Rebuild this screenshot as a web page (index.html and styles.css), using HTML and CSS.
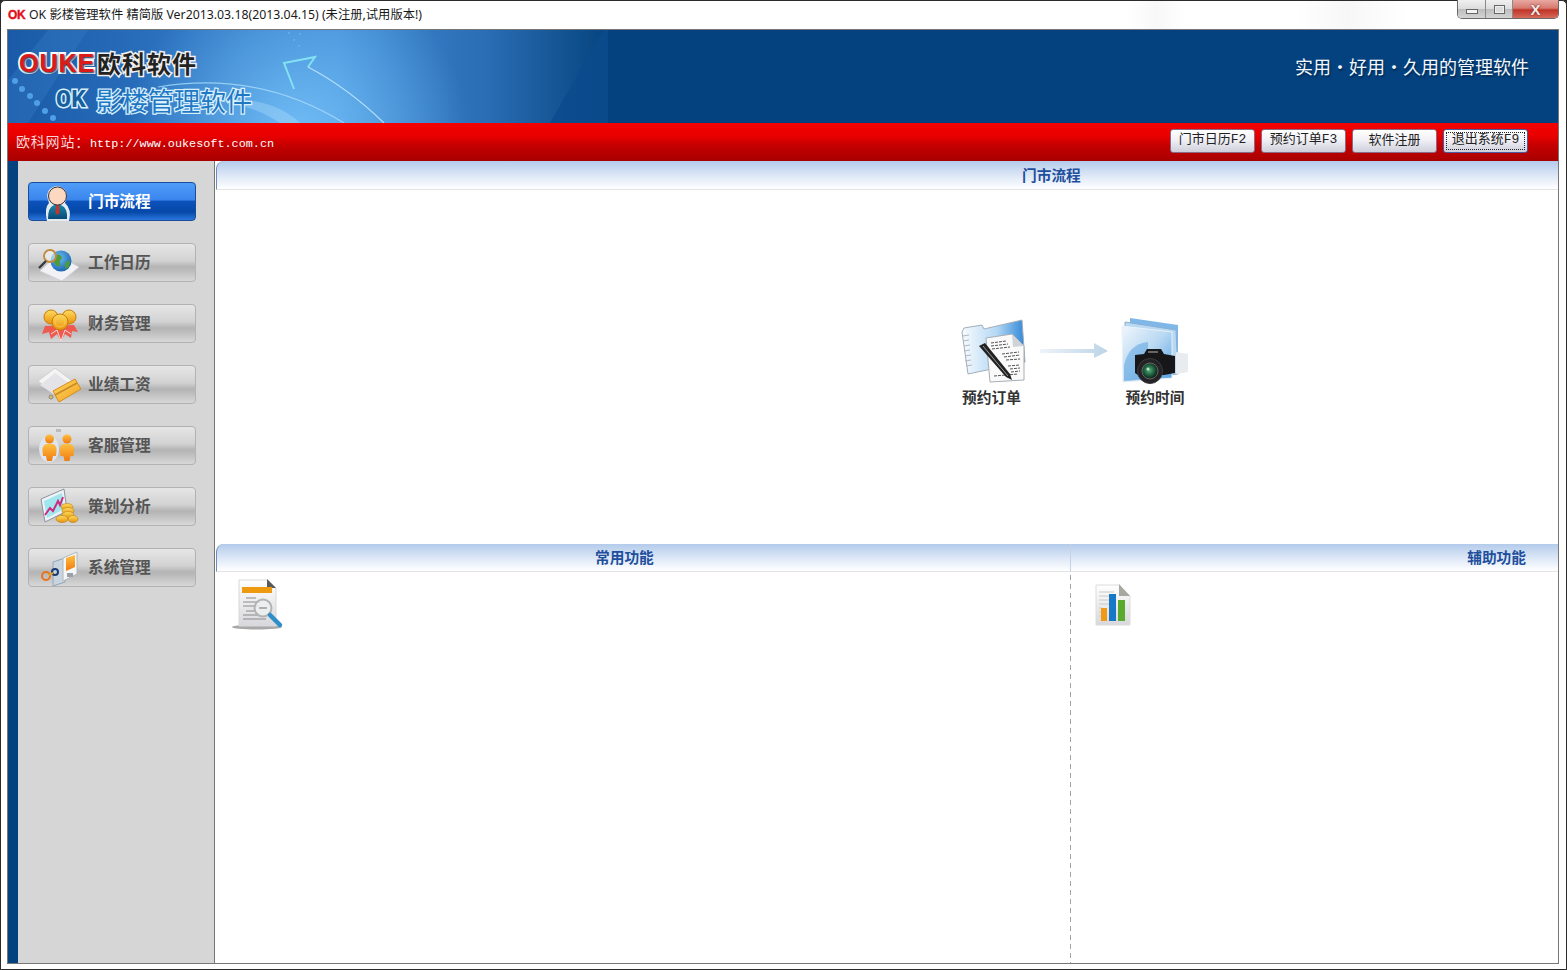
FILE: index.html
```html
<!DOCTYPE html>
<html lang="zh-CN">
<head>
    <meta charset="UTF-8">
    <title>OK 影楼管理软件</title>
    <link rel="stylesheet" href="styles.css">
</head>
<body>
    <svg class="svg-defs" aria-hidden="true">
        <defs>
            <linearGradient id="gCoin" x1="0" y1="0" x2="0" y2="1"><stop offset="0" stop-color="#ffdc60"/><stop offset="1" stop-color="#e8920c"/></linearGradient>
            <linearGradient id="gOrange" x1="0" y1="0" x2="0" y2="1"><stop offset="0" stop-color="#ffc040"/><stop offset="1" stop-color="#f07a10"/></linearGradient>
            <linearGradient id="gCard" x1="0" y1="0" x2="1" y2="1"><stop offset="0" stop-color="#ffd860"/><stop offset="1" stop-color="#f0a020"/></linearGradient>
            <linearGradient id="gPaper" x1="0" y1="0" x2="0" y2="1"><stop offset="0" stop-color="#ffffff"/><stop offset="1" stop-color="#d8d8dc"/></linearGradient>
            <linearGradient id="gFolder" x1="0" y1="0" x2="1" y2="0"><stop offset="0" stop-color="#f8fbfe"/><stop offset="0.55" stop-color="#b4d8f4"/><stop offset="1" stop-color="#2f86d8"/></linearGradient>
            <linearGradient id="gBlueBook" x1="0" y1="0" x2="1" y2="1"><stop offset="0" stop-color="#f0f6fc"/><stop offset="0.5" stop-color="#b8d8f2"/><stop offset="1" stop-color="#4f9ce0"/></linearGradient>
            <linearGradient id="gSuit" x1="0" y1="0" x2="0" y2="1"><stop offset="0" stop-color="#1a86a8"/><stop offset="1" stop-color="#0a4a78"/></linearGradient>
            <radialGradient id="gGlobe" cx="0.4" cy="0.35" r="0.7"><stop offset="0" stop-color="#6cc0f0"/><stop offset="1" stop-color="#1560b0"/></radialGradient>
            <radialGradient id="gLens" cx="0.45" cy="0.45" r="0.6"><stop offset="0" stop-color="#5ab078"/><stop offset="0.55" stop-color="#1c5a3c"/><stop offset="1" stop-color="#0c0c0c"/></radialGradient>
        </defs>
    </svg>

    <div class="window">
        <div class="titlebar">
            <span class="app-mark">OK</span>
            <span class="app-title">OK 影楼管理软件 精简版 Ver2013.03.18(2013.04.15) (未注册,试用版本!)</span>
            <div class="win-controls">
                <div class="win-btn win-min"><span class="glyph-min"></span></div>
                <div class="win-btn win-max"><span class="glyph-max"></span></div>
                <div class="win-btn win-close">X</div>
            </div>
        </div>

        <div class="client">
            <div class="banner">
                <svg class="banner-art" width="600" height="93" viewBox="0 0 600 93">
                    <defs>
                        <linearGradient id="gBanner" x1="0" y1="0" x2="1" y2="0">
                            <stop offset="0" stop-color="#1a5aa6"/>
                            <stop offset="0.25" stop-color="#2a70bd"/>
                            <stop offset="0.55" stop-color="#3f8ad4"/>
                            <stop offset="0.8" stop-color="#2a6db4"/>
                            <stop offset="1" stop-color="#06447f"/>
                        </linearGradient>
                        <radialGradient id="gGlow" cx="290" cy="105" r="170" gradientUnits="userSpaceOnUse">
                            <stop offset="0" stop-color="#74c0f8" stop-opacity="0.95"/>
                            <stop offset="1" stop-color="#74c0f8" stop-opacity="0"/>
                        </radialGradient>
                    </defs>
                    <rect width="600" height="93" fill="url(#gBanner)"/>
                    <rect width="600" height="93" fill="url(#gGlow)"/>
                    <polygon points="595,0 600,0 600,93 542,93" fill="#0b4a8c" opacity="0.8"/>
                    <polygon points="40,0 80,0 20,93 0,93 0,50" fill="#3f86cf" opacity="0.25"/>
                    <g fill="#4f9fe6">
                        <circle cx="7" cy="51" r="3"/><circle cx="14" cy="59" r="3"/><circle cx="22" cy="66" r="3"/>
                        <circle cx="29" cy="73" r="3"/><circle cx="37" cy="81" r="3"/><circle cx="45" cy="88" r="3"/>
                    </g>
                    <g fill="#7ab8ee" opacity="0.7">
                        <circle cx="281" cy="3" r="1"/><circle cx="292" cy="4" r="1"/><circle cx="286" cy="10" r="1"/><circle cx="291" cy="16" r="1"/>
                    </g>
                    <path d="M286 59 L276 33 L307 27 L300 37" fill="none" stroke="#82e2f2" stroke-width="2"/>
                    <path d="M300 37 Q340 58 376 93" fill="none" stroke="#b4e0fa" stroke-width="1.2"/>
                    <path d="M150 57 Q250 40 336 93" fill="none" stroke="#a8dcfa" stroke-width="1.2" opacity="0.8"/>
                    <path d="M200 70 Q262 64 292 93 L272 93 Q245 74 200 70 Z" fill="#b8e2fb" opacity="0.35"/>
                </svg>
                <div class="logo">
                    <div class="logo-line-one"><span class="logo-ouke">OUKE</span><span class="logo-cn">欧科软件</span></div>
                    <div class="logo-line-two"><span class="logo-ok">OK</span><span class="logo-product">影楼管理软件</span></div>
                </div>
                <div class="tagline">实用・好用・久用的管理软件</div>
            </div>

            <div class="redbar">
                <div class="site-link">欧科网站：<span class="site-url">http://www.oukesoft.com.cn</span></div>
                <div class="toolbar">
                    <button class="tool-btn">门市日历<span class="key">F2</span></button>
                    <button class="tool-btn">预约订单<span class="key">F3</span></button>
                    <button class="tool-btn">软件注册</button>
                    <button class="tool-btn focused"><span class="focus-ring">退出系统<span class="key">F9</span></span></button>
                </div>
            </div>

            <div class="main">
                <div class="strip"></div>
                <div class="sidebar">
                    <div class="nav-btn active">
                        <svg class="nav-icon" viewBox="0 0 44 40">
                            <path d="M10 39 Q7 26 12 21 Q8 11 13 7 Q20 1 27 7 Q32 11 28 21 Q35 27 32 39 Z" fill="#e4ecf0"/>
                            <path d="M11 37 Q11 25 17 23 L24 23 Q31 26 30 37 Z" fill="url(#gSuit)"/>
                            <path d="M19 23 L22 23 L22.500 31 L20.500 33 L18.500 31 Z" fill="#c8342a"/>
                            <circle cx="20.500" cy="14" r="9" fill="#fcd8c0" stroke="#3a3030" stroke-width="1"/>
                        </svg>
                        <span>门市流程</span>
                    </div>
                    <div class="nav-btn">
                        <svg class="nav-icon" viewBox="0 0 44 40">
                            <polygon points="3,28 20,12 42,24 25,38" fill="#f2f2f6" stroke="#d4d4dc"/>
                            <circle cx="24" cy="18" r="10.500" fill="url(#gGlobe)"/>
                            <path d="M18 12 Q24 10 25 15 Q21 19 24 23 Q19 24 17 19 Z M28 20 L33 17 L32 24 L28 26 Z" fill="#4f9a3a"/>
                            <circle cx="13" cy="13" r="6" fill="#f4fafc" fill-opacity="0.5" stroke="#c08a40" stroke-width="1.800"/>
                            <path d="M9 18 L2 25" stroke="#3a3a3a" stroke-width="2.400"/>
                        </svg>
                        <span>工作日历</span>
                    </div>
                    <div class="nav-btn">
                        <svg class="nav-icon" viewBox="0 0 44 40">
                            <path d="M8 22 L5 30 L12 28 L14 35 L20 30 L24 37 L28 30 L34 34 L35 27 L41 28 L37 21 Z" fill="#ee5a50"/>
                            <path d="M14 30 L20 26 L24 37 L28 26 L34 30" fill="none" stroke="#ffd8d0" stroke-width="1"/>
                            <circle cx="14" cy="13" r="7" fill="url(#gCoin)" stroke="#c87c08"/>
                            <circle cx="32" cy="13" r="7" fill="url(#gCoin)" stroke="#c87c08"/>
                            <circle cx="23" cy="18" r="8" fill="url(#gCoin)" stroke="#c87c08"/>
                            <circle cx="23" cy="18" r="5" fill="none" stroke="#f8c850"/>
                        </svg>
                        <span>财务管理</span>
                    </div>
                    <div class="nav-btn">
                        <svg class="nav-icon" viewBox="0 0 44 40">
                            <polygon points="1,16 18,3 38,18 20,32" fill="#f4f4f4" stroke="#cfcfcf"/>
                            <polygon points="3,20 18,8 32,18 18,30" fill="#e4e4e8"/>
                            <polygon points="16,26 38,14 44,24 22,37" fill="url(#gCard)" stroke="#d88a20"/>
                            <path d="M18 30 L40 18" stroke="#c88a28" stroke-width="1.500"/>
                            <circle cx="14" cy="32" r="2" fill="#d8c060" stroke="#888"/>
                        </svg>
                        <span>业绩工资</span>
                    </div>
                    <div class="nav-btn">
                        <svg class="nav-icon" viewBox="0 0 44 40">
                            <ellipse cx="12" cy="23" rx="10" ry="13" fill="#dde6f0"/>
                            <g fill="url(#gOrange)">
                                <circle cx="12.500" cy="13" r="4.500"/>
                                <path d="M6 30 Q4 19 9 18 L16 18 Q21 19 19 30 L16 30 L15 35 L10 35 L9 30 Z"/>
                                <circle cx="30" cy="13" r="4.500"/>
                                <path d="M23.500 30 Q21.500 19 26.500 18 L33.500 18 Q38.500 19 36.500 30 L33.500 30 L32.500 35 L27.500 35 L26.500 30 Z"/>
                            </g>
                            <rect x="19" y="3" width="5" height="3" fill="#bbb"/>
                        </svg>
                        <span>客服管理</span>
                    </div>
                    <div class="nav-btn">
                        <svg class="nav-icon" viewBox="0 0 44 40">
                            <polygon points="4,12 27,2 30,24 8,35" fill="#eef2f6" stroke="#8a94a0"/>
                            <polygon points="7,14 25,6 27,22 10,31" fill="#9fe6ee"/>
                            <path d="M8 28 L13 21 L16 24 L21 14 L23 18 L26 10" fill="none" stroke="#d02a80" stroke-width="2"/>
                            <g fill="url(#gCoin)" stroke="#b8801a" stroke-width="0.600">
                                <ellipse cx="30" cy="20" rx="6" ry="3.500"/><ellipse cx="31" cy="24" rx="6" ry="3.500"/>
                                <ellipse cx="31" cy="28" rx="6" ry="3.500"/><ellipse cx="25" cy="32" rx="6" ry="3.500"/>
                                <ellipse cx="36" cy="32" rx="5" ry="3.500"/>
                            </g>
                        </svg>
                        <span>策划分析</span>
                    </div>
                    <div class="nav-btn">
                        <svg class="nav-icon" viewBox="0 0 44 40">
                            <polygon points="16,14 28,10 28,34 16,38" fill="#c8d4e0" stroke="#96a6b6"/>
                            <polygon points="26,10 40,4 40,26 26,33" fill="#f4f6f8" stroke="#b0b8c0"/>
                            <polygon points="29,10 38,7 38,19 29,23" fill="url(#gOrange)"/>
                            <rect x="30" y="25" width="6" height="4" fill="#9aa0a8"/>
                            <circle cx="9" cy="28" r="4" fill="none" stroke="#e8731a" stroke-width="2"/>
                            <circle cx="18" cy="24" r="3" fill="none" stroke="#1a3a70" stroke-width="2"/>
                            <path d="M12 27 L16 25" stroke="#e8a01a" stroke-width="2"/>
                        </svg>
                        <span>系统管理</span>
                    </div>
                </div>

                <div class="content">
                    <div class="panel-head head-flow">门市流程</div>
                    <div class="flow">
                        <div class="flow-item">
                            <svg class="flow-icon" width="66" height="66" viewBox="0 0 66 66">
                                <path d="M2 14 L4 10 L22 7 L24 11 L62 2 L65 44 L8 56 Z" fill="url(#gFolder)" stroke="#a4aeb8"/>
                                <g stroke="#b0b8c4"><path d="M3 18 L9 17 M3 23 L9 22 M4 28 L10 27 M4 33 L10 32 M5 38 L11 37 M5 43 L11 42 M6 48 L12 47"/></g>
                                <polygon points="26,20 52,16 64,28 64,62 30,64" fill="#fafafa" stroke="#a8aeb4"/>
                                <polygon points="52,16 64,28 53,29" fill="#d0d4d8"/>
                                <g stroke="#555" stroke-width="1" stroke-dasharray="3 1"><path d="M31 25 L46 23 M31 28 L48 26 M32 31 L50 29 M42 36 L59 34 M44 39 L60 37 M46 42 L60 41 M48 48 L60 47 M50 51 L60 50 M51 54 L60 53 M34 58 L58 56"/></g>
                                <path d="M19 28 L25 25 L50 56 L52 62 L46 59 Z" fill="#222"/>
                                <path d="M23 28 L48 58" stroke="#9a9a9a"/>
                            </svg>
                            <span class="flow-label label-first">预约订单</span>
                        </div>
                        <svg class="flow-arrow" width="68" height="16" viewBox="0 0 68 16">
                            <defs><linearGradient id="gArrow" x1="0" y1="0" x2="1" y2="0"><stop offset="0" stop-color="#eef3f8"/><stop offset="1" stop-color="#bcd4e8"/></linearGradient></defs>
                            <polygon points="0,6 54,6 54,0 68,8 54,15 54,10 0,10" fill="url(#gArrow)"/>
                        </svg>
                        <div class="flow-item">
                            <svg class="flow-icon" width="70" height="66" viewBox="0 0 70 66">
                                <polygon points="10,0 58,7 58,48 10,40" fill="#7fb8e8"/>
                                <polygon points="5,4 56,12 58,56 5,62" fill="#b9d8f2" stroke="#88b0d4"/>
                                <polygon points="2,8 52,14 52,60 3,64" fill="url(#gBlueBook)" stroke="#e8f2fb"/>
                                <path d="M4 48 Q8 26 28 24 L28 60 L4 63 Z" fill="#5ba4e0" opacity="0.55"/>
                                <polygon points="56,34 68,36 68,54 56,56" fill="#e8ecef"/>
                                <path d="M15 37 L24 36 L27 31 L41 31 L44 36 L55 38 L55 55 L44 57 L18 57 L15 55 Z" fill="#17171a"/>
                                <rect x="28" y="33" width="10" height="2" fill="#666"/>
                                <circle cx="30" cy="53" r="12.500" fill="#232326" stroke="#3a3a3e"/>
                                <circle cx="30" cy="53" r="8" fill="url(#gLens)" stroke="#666"/>
                                <circle cx="28" cy="51" r="1.500" fill="#b4e4c4"/>
                            </svg>
                            <span class="flow-label">预约时间</span>
                        </div>
                    </div>

                    <div class="lower">
                        <div class="lower-col col-common">
                            <div class="panel-head head-common">常用功能</div>
                            <div class="lower-body body-common">
                                <svg width="52" height="54" viewBox="0 0 52 54">
                                    <ellipse cx="25" cy="49" rx="25" ry="2.500" fill="#a8a8a8"/>
                                    <polygon points="7,2 36,2 44,10 44,48 7,48" fill="url(#gPaper)" stroke="#d8d8d8"/>
                                    <polygon points="35,1 44,10 35,10" fill="#5a5a5a"/>
                                    <rect x="10" y="9" width="30" height="6" fill="#ee9a10"/>
                                    <g stroke="#8a8a8a"><path d="M14 20 L24 20 M11 24 L28 24 M11 28 L26 28 M14 33 L24 33 M11 37 L26 37 M11 41 L34 41"/></g>
                                    <circle cx="31" cy="30" r="8.500" fill="#eef0f0" fill-opacity="0.8" stroke="#b0b4b4" stroke-width="2"/>
                                    <path d="M27 30 L35 30" stroke="#9a9a9a" stroke-width="1.500"/>
                                    <path d="M38 37 L48 47" stroke="#2f8ec8" stroke-width="4.500" stroke-linecap="round"/>
                                </svg>
                            </div>
                        </div>
                        <div class="lower-col col-aux">
                            <div class="panel-head head-aux">辅助功能</div>
                            <div class="lower-body body-aux">
                                <svg width="38" height="44" viewBox="0 0 38 44">
                                    <polygon points="2,2 25,2 36,13 36,42 2,42" fill="url(#gPaper)" stroke="#dcdcdc"/>
                                    <polygon points="25,1 36,13 25,13" fill="#a8a8a0"/>
                                    <g stroke="#c8c8c8"><path d="M5 9 L20 9 M5 13 L20 13 M5 17 L15 17 M5 21 L15 21 M5 25 L8 25 M5 29 L8 29 M5 33 L8 33"/></g>
                                    <rect x="7" y="25" width="6" height="13" fill="#f09a18"/>
                                    <rect x="15" y="11" width="7" height="27" fill="#1878c8"/>
                                    <rect x="24" y="17" width="7" height="21" fill="#5aaa30"/>
                                </svg>
                            </div>
                        </div>
                    </div>
                </div>
            </div>
        </div>
    </div>
</body>
</html>
```

FILE: styles.css
```css
* {
    box-sizing: border-box;
}
html, body {
    margin: 0;
    padding: 0;
}
body {
    width: 1567px;
    height: 970px;
    overflow: hidden;
    background-color: #2a2a2a;
    font-family: "Noto Sans CJK SC", "Noto Sans", sans-serif;
}
.svg-defs {
    position: absolute;
    width: 0;
    height: 0;
}
.window {
    width: 1567px;
    height: 970px;
    display: flex;
    flex-direction: column;
    background-color: #fff;
    border: 1px solid #2b2b2b;
    border-radius: 5px 5px 0 0;
    padding: 0 7px 5px 6px;
}

/* title bar */
.titlebar {
    height: 28px;
    flex-shrink: 0;
    display: flex;
    align-items: flex-start;
    background: linear-gradient(90deg, #fff 1120px, #f8f8f8 1150px, #fff 1180px, #fff 1290px, #f7f7f7 1340px, #fff 1400px);
}
.app-mark {
    margin: 7px 0 0 1px;
    width: 21px;
    font-family: "Liberation Sans", sans-serif;
    font-size: 12px;
    font-weight: bold;
    letter-spacing: -0.3px;
    line-height: 14px;
    color: #e0101a;
    -webkit-text-stroke: 0.4px #e0101a;
}
.app-title {
    margin-top: 6px;
    font-family: "Noto Sans", "Noto Sans CJK SC", sans-serif;
    font-size: 12.300px;
    line-height: 16px;
    color: #1a1a1a;
    white-space: nowrap;
}
.win-controls {
    margin-left: auto;
    display: flex;
    height: 19px;
    margin-top: -1px;
    border: 1px solid #6a6a6a;
    border-top: none;
    border-radius: 0 0 5px 5px;
    overflow: hidden;
}
.win-btn {
    display: flex;
    align-items: center;
    justify-content: center;
    background: linear-gradient(#f0f0f0, #dcdcdc 50%, #bdbdbd 52%, #d4d4d4);
    border-right: 1px solid #8a8a8a;
}
.win-min {
    width: 28px;
}
.win-max {
    width: 27px;
}
.win-close {
    width: 45px;
    border-right: none;
    background: linear-gradient(#e8a8a0, #d87a70 45%, #c03428 55%, #d86a5a);
    color: #f4e8e4;
    font-family: "Liberation Sans", sans-serif;
    font-size: 15px;
    font-weight: bold;
    text-shadow: 0 0 2px #5a1a14;
}
.glyph-min {
    width: 12px;
    height: 5px;
    margin-top: 5px;
    border: 1px solid #666;
    background-color: #f4f4f4;
}
.glyph-max {
    width: 11px;
    height: 9px;
    border: 1px solid #666;
    background-color: #dcdcdc;
    box-shadow: inset 0 0 0 1px #f0f0f0;
}

/* client area */
.client {
    flex: 1;
    display: flex;
    flex-direction: column;
    min-height: 0;
    border: 1px solid #777;
}
.banner {
    position: relative;
    height: 93px;
    flex-shrink: 0;
    display: flex;
    justify-content: space-between;
    background-color: #04427f;
}
.banner-art {
    position: absolute;
    left: 0;
    top: 0;
}
.logo {
    position: relative;
    padding: 18px 0 0 11px;
}
.logo-line-one {
    display: flex;
    align-items: center;
    height: 30px;
}
.logo-ouke {
    width: 78px;
    font-family: "Liberation Sans", sans-serif;
    font-size: 25px;
    font-weight: bold;
    letter-spacing: 1px;
    color: #dc1a1a;
    -webkit-text-stroke: 4px #fff;
    paint-order: stroke fill;
    text-shadow: 1px 1px 2px #0a2a50;
}
.logo-cn {
    font-size: 24px;
    font-weight: bold;
    letter-spacing: 1px;
    line-height: 30px;
    color: #222;
    -webkit-text-stroke: 3px #f0f0f0;
    paint-order: stroke fill;
}
.logo-line-two {
    display: flex;
    align-items: center;
    height: 30px;
    margin-top: 7px;
    padding-left: 37px;
}
.logo-ok {
    width: 40px;
    font-family: "Liberation Mono", monospace;
    font-size: 25px;
    font-weight: bold;
    color: #17609f;
    -webkit-text-stroke: 3px #d8f0fc;
    paint-order: stroke fill;
}
.logo-product {
    font-size: 26px;
    line-height: 30px;
    color: #1f78c4;
    -webkit-text-stroke: 2.500px #d8f0fc;
    paint-order: stroke fill;
}
.tagline {
    position: relative;
    padding: 23px 29px 0 0;
    font-size: 18px;
    line-height: 26px;
    color: #f4f8fc;
    text-shadow: 1px 2px 2px #01274e;
}
.redbar {
    height: 38px;
    flex-shrink: 0;
    display: flex;
    align-items: center;
    justify-content: space-between;
    padding: 0 30px 0 8px;
    background: linear-gradient(#f40000, #e80000 35%, #c40000 60%, #a80000);
}
.site-link {
    margin-bottom: 2px;
    font-size: 14px;
    letter-spacing: 0.8px;
    color: #f6d4d4;
    white-space: nowrap;
}
.site-url {
    font-family: "Liberation Mono", monospace;
    font-size: 11.800px;
    letter-spacing: 0;
    color: #fff;
}
.toolbar {
    display: flex;
    gap: 6px;
    margin-top: -2px;
}
.tool-btn {
    width: 85px;
    height: 24px;
    padding: 0 0 5px;
    border: 1px solid #8a6a86;
    border-radius: 3px;
    background: linear-gradient(#ffffff, #f0f0f6 45%, #cfcfdb);
    font-family: "Noto Sans CJK SC", sans-serif;
    font-size: 13px;
    line-height: 16px;
    color: #222;
    white-space: nowrap;
}
.key {
    font-family: "Liberation Mono", monospace;
    font-size: 13px;
}
.tool-btn.focused {
    border-color: #4a5a9a;
    padding: 2px;
}
.focus-ring {
    display: block;
    height: 18px;
    border: 1px dotted #222;
    line-height: 10px;
}

/* sidebar */
.main {
    flex: 1;
    display: flex;
    min-height: 0;
}
.strip {
    width: 10px;
    background-color: #04427f;
}
.sidebar {
    width: 197px;
    flex-shrink: 0;
    display: flex;
    flex-direction: column;
    gap: 22px;
    padding: 21px 18px 0 10px;
    background-color: #d6d6d6;
    border-right: 1px solid #777;
}
.nav-btn {
    height: 39px;
    display: flex;
    align-items: center;
    gap: 7px;
    padding-left: 8px;
    border: 1px solid #b2b2b2;
    border-radius: 4px;
    background: linear-gradient(#e6e6e6, #d2d2d2 45%, #b4b4b4 62%, #bcbcbc 72%, #d8d8d8);
    font-size: 15.700px;
    font-weight: bold;
    line-height: 20px;
    color: #555;
    white-space: nowrap;
}
.nav-btn span {
    padding-bottom: 2px;
}
.nav-btn.active {
    border-color: #1b4c98;
    background: linear-gradient(#4f9cf8, #3a86ee 45%, #0c52ba 50%, #0548a8 78%, #2a76dc);
    color: #fff;
}
.nav-icon {
    width: 44px;
    height: 40px;
    flex-shrink: 0;
}

/* content */
.content {
    flex: 1;
    min-width: 0;
    display: flex;
    flex-direction: column;
    background-color: #fff;
}
.panel-head {
    height: 29px;
    flex-shrink: 0;
    margin-left: 1px;
    border-left: 1px solid #6f8cba;
    border-bottom: 1px solid #e4e4e4;
    border-radius: 8px 0 0 0;
    background: linear-gradient(#b3cbeb, #dfe9f7 55%, #fff);
    font-size: 14.700px;
    font-weight: bold;
    line-height: 27px;
    color: #1f4f9c;
    white-space: nowrap;
}
.head-flow {
    padding-left: 805px;
}
.flow {
    height: 354px;
    flex-shrink: 0;
    display: flex;
    align-items: flex-start;
    padding: 128px 0 0 745px;
}
.flow-item {
    display: flex;
    flex-direction: column;
    align-items: center;
    gap: 2px;
}
.flow-label {
    font-size: 14.700px;
    font-weight: bold;
    line-height: 22px;
    color: #333;
    white-space: nowrap;
}
.label-first {
    margin-right: 3px;
}
.flow-arrow {
    margin: 25px 12px 0 14px;
}
.lower {
    flex: 1;
    min-height: 0;
    display: flex;
}
.lower-col {
    display: flex;
    flex-direction: column;
}
.col-common {
    width: 855px;
}
.col-aux {
    flex: 1;
}
.head-common {
    height: 28px;
    padding-left: 378px;
    line-height: 25px;
}
.head-aux {
    height: 28px;
    margin-left: 0;
    padding-right: 32px;
    border-left: 1px solid #c4d2e4;
    border-radius: 0;
    text-align: right;
    line-height: 25px;
}
.lower-body {
    flex: 1;
}
.body-common {
    padding: 6px 0 0 17px;
}
.body-aux {
    margin-top: 3px;
    padding: 8px 0 0 24px;
    background: repeating-linear-gradient(#a4a4a4 0 5px, transparent 5px 9px) left top / 1px 100% no-repeat;
}
```
